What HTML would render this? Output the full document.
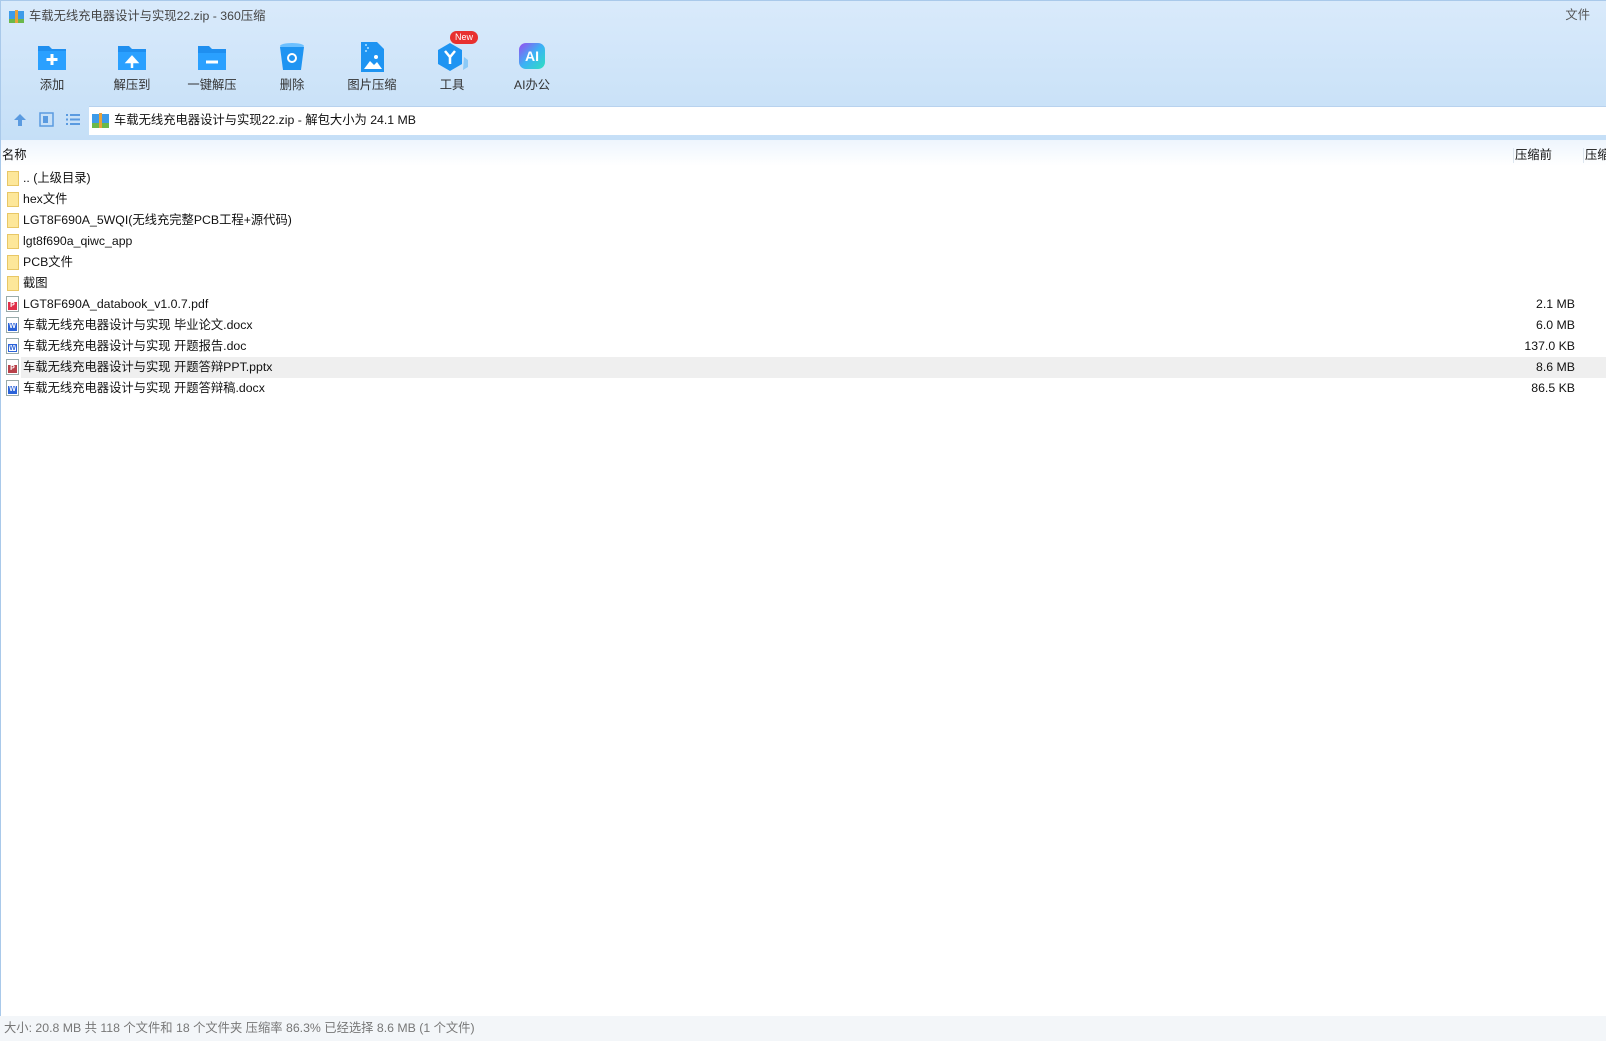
<!DOCTYPE html>
<html><head><meta charset="utf-8"><style>
*{margin:0;padding:0;box-sizing:border-box}
body{width:1606px;height:1041px;overflow:hidden;background:#fff;font-family:"Liberation Sans","Noto Sans CJK SC",sans-serif;font-size:12.3px;line-height:15px;color:#111;position:relative}
.top{position:absolute;left:0;top:0;width:1606px;height:140px;background:linear-gradient(#d9eafb,#c5dff7);border-top:1px solid #a9c9ea;border-left:1px solid #a9c9ea}
.title{position:absolute;left:28px;top:8px;color:#444}
.fi{position:absolute;left:8px;top:9px;width:15px;height:13px}
.tb{position:absolute;top:40px;width:70px;text-align:center}
.tb .ic{width:32px;height:32px;margin:0 auto;position:relative}
.tb .lb{margin-top:5px;color:#333;white-space:nowrap}
.addr{position:absolute;left:89px;top:106px;width:1517px;height:29px;background:#fff;border-top:1px solid #b8d2ee}
.addr span{position:absolute;left:25px;top:6px;color:#111;white-space:nowrap}
.hdr{position:absolute;left:0;top:140px;width:1606px;height:26px;background:linear-gradient(#eef5fd,#fff);border-left:1px solid #a9c9ea}
.hdr span{position:absolute;top:8px;white-space:nowrap}
.row{position:absolute;left:0;width:1606px;height:21px}
.row .n{position:absolute;left:23px;top:3px;white-space:nowrap;height:15px;line-height:15px}
.row .s{position:absolute;right:31px;top:3px;line-height:15px}
.fold{position:absolute;left:7px;top:3px;width:12px;height:15px;background:#fde79a;border:1px solid #e8c766}
.doc{position:absolute;left:6px;top:2px;width:13px;height:16px;border:1px solid #9aa;background:#fff}
.doc i{position:absolute;left:1px;bottom:1px;width:9px;height:8px;font-style:normal;color:#fff;font-size:7px;line-height:8px;text-align:center;font-weight:bold}
.status{position:absolute;left:0;top:1016px;width:1606px;height:25px;background:#f3f6f9;color:#777;padding:5px 0 0 4px;white-space:nowrap}
.lb2{position:absolute;left:0;top:140px;width:1px;height:876px;background:#a9c9ea}
</style></head><body>
<div class="top">
 <svg class="fi" viewBox="0 0 15 13"><rect x="0" y="1" width="15" height="12" fill="#3d9be9"/><rect x="0" y="9" width="15" height="4" fill="#6bb84a"/><rect x="6" y="0" width="3" height="13" fill="#e9a23b"/></svg>
 <div class="title">车载无线充电器设计与实现22.zip - 360压缩</div>
 <div style="position:absolute;right:16px;top:7px;color:#555">文件</div>
 <div class="tb" style="left:16px"><div class="ic"><svg width="32" height="32" viewBox="0 0 32 32"><path d="M2 5h11l3 3h14v21H2z" fill="#1f8ff0"/><path d="M2 10h28v19H2z" fill="#2aa0ff"/><path d="M16 13v11M10.5 18.5h11" stroke="#fff" stroke-width="3"/></svg></div><div class="lb">添加</div></div>
 <div class="tb" style="left:96px"><div class="ic"><svg width="32" height="32" viewBox="0 0 32 32"><path d="M2 5h11l3 3h14v21H2z" fill="#1f8ff0"/><path d="M2 11h28v18H2z" fill="#2aa0ff"/><path d="M16 27v-8M11.5 21l4.5-5 4.5 5z" stroke="#fff" stroke-width="2.5" fill="#fff"/></svg></div><div class="lb">解压到</div></div>
 <div class="tb" style="left:176px"><div class="ic"><svg width="32" height="32" viewBox="0 0 32 32"><path d="M2 5h11l3 3h14v21H2z" fill="#1f8ff0"/><path d="M2 12h28v17H2z" fill="#2aa0ff"/><path d="M10 21h12" stroke="#fff" stroke-width="3"/></svg></div><div class="lb">一键解压</div></div>
 <div class="tb" style="left:256px"><div class="ic"><svg width="32" height="32" viewBox="0 0 32 32"><ellipse cx="16" cy="5" rx="12" ry="3" fill="#6cc0ff"/><path d="M4 6l3 23h18l3-23z" fill="#1e94f2"/><circle cx="16" cy="17" r="4" fill="none" stroke="#fff" stroke-width="2"/></svg></div><div class="lb">删除</div></div>
 <div class="tb" style="left:336px"><div class="ic"><svg width="32" height="32" viewBox="0 0 32 32"><path d="M5 1h16l7 7v23H5z" fill="#1e94f2"/><path d="M8 28l6-8 4 4 3-3 5 7z" fill="#fff"/><circle cx="20" cy="16" r="2" fill="#fff"/><path d="M10 3v2M12 6v2M10 9v2" stroke="#8cd0ff" stroke-width="2"/></svg></div><div class="lb">图片压缩</div></div>
 <div class="tb" style="left:416px"><div class="ic"><svg width="32" height="32" viewBox="0 0 32 32"><path d="M14 2l12 7v14l-12 7-12-7V9z" fill="#1e94f2"/><path d="M28 16l4 3v7l-5 3z" fill="#8ccaf7"/><path d="M9 10l5 6 5-6M14 16v7" stroke="#fff" stroke-width="2.5" fill="none"/></svg><div style="position:absolute;left:14px;top:-10px;background:#e8302f;color:#fff;font-size:9px;line-height:11px;border-radius:8px;padding:1px 5px">New</div></div><div class="lb">工具</div></div>
 <div class="tb" style="left:496px"><div class="ic"><div style="position:absolute;left:3px;top:2px;width:26px;height:26px;border-radius:7px;background:linear-gradient(135deg,#9a4cf0,#3bb2f5 50%,#2fe0c0);color:#fff;font-weight:bold;font-size:14px;line-height:26px;text-align:center">AI</div></div><div class="lb">AI办公</div></div>
 <svg style="position:absolute;left:11px;top:111px" width="16" height="16" viewBox="0 0 16 16"><path d="M8 2l6 6h-4v6H6V8H2z" fill="#5a9ae0"/></svg>
 <svg style="position:absolute;left:38px;top:111px" width="15" height="15" viewBox="0 0 15 15"><rect x="1" y="1" width="13" height="13" fill="none" stroke="#5a9ae0" stroke-width="1.5"/><rect x="4" y="4" width="5" height="7" fill="#5a9ae0"/></svg>
 <svg style="position:absolute;left:64px;top:111px" width="16" height="15" viewBox="0 0 16 15"><path d="M1 3h2M5 3h10M1 7.5h2M5 7.5h10M1 12h2M5 12h10" stroke="#5a9ae0" stroke-width="2"/></svg>
</div>
<div class="addr"><svg style="position:absolute;left:3px;top:6px" width="17" height="15" viewBox="0 0 17 15"><rect x="0" y="1" width="17" height="14" fill="#3d9be9"/><rect x="0" y="10" width="17" height="5" fill="#6bb84a"/><rect x="7" y="0" width="3" height="15" fill="#e9a23b"/></svg><span>车载无线充电器设计与实现22.zip - 解包大小为 24.1 MB</span></div>
<div class="hdr"><span style="left:1px">名称</span><span style="left:1512px;border-left:1px solid #dde6ef;padding-left:1px">压缩前</span><span style="left:1582px;border-left:1px solid #dde6ef;padding-left:1px">压缩</span></div>
<div class="lb2"></div>
<div class="row" style="top:168px"><div class="fold"></div><div class="n">.. (上级目录)</div></div>
<div class="row" style="top:189px"><div class="fold"></div><div class="n">hex文件</div></div>
<div class="row" style="top:210px"><div class="fold"></div><div class="n">LGT8F690A_5WQI(无线充完整PCB工程+源代码)</div></div>
<div class="row" style="top:231px"><div class="fold"></div><div class="n">lgt8f690a_qiwc_app</div></div>
<div class="row" style="top:252px"><div class="fold"></div><div class="n">PCB文件</div></div>
<div class="row" style="top:273px"><div class="fold"></div><div class="n">截图</div></div>
<div class="row" style="top:294px"><div class="doc"><i style="background:#e0304a">P</i></div><div class="n">LGT8F690A_databook_v1.0.7.pdf</div><div class="s">2.1 MB</div></div>
<div class="row" style="top:315px"><div class="doc"><i style="background:#2b63d9">W</i></div><div class="n">车载无线充电器设计与实现 毕业论文.docx</div><div class="s">6.0 MB</div></div>
<div class="row" style="top:336px"><div class="doc"><i style="background:#fff;color:#2b63d9;border:1px solid #2b63d9">W</i></div><div class="n">车载无线充电器设计与实现 开题报告.doc</div><div class="s">137.0 KB</div></div>
<div class="row" style="top:357px;background:#efefef;left:21px;width:1585px"><div class="n" style="left:2px">车载无线充电器设计与实现 开题答辩PPT.pptx</div><div class="s">8.6 MB</div></div>
<div class="doc" style="top:359px;position:absolute"><i style="background:#b8414a">P</i></div>
<div class="row" style="top:378px"><div class="doc"><i style="background:#2b63d9">W</i></div><div class="n">车载无线充电器设计与实现 开题答辩稿.docx</div><div class="s">86.5 KB</div></div>
<div class="status">大小: 20.8 MB 共 118 个文件和 18 个文件夹 压缩率 86.3% 已经选择 8.6 MB (1 个文件)</div>
</body></html>
